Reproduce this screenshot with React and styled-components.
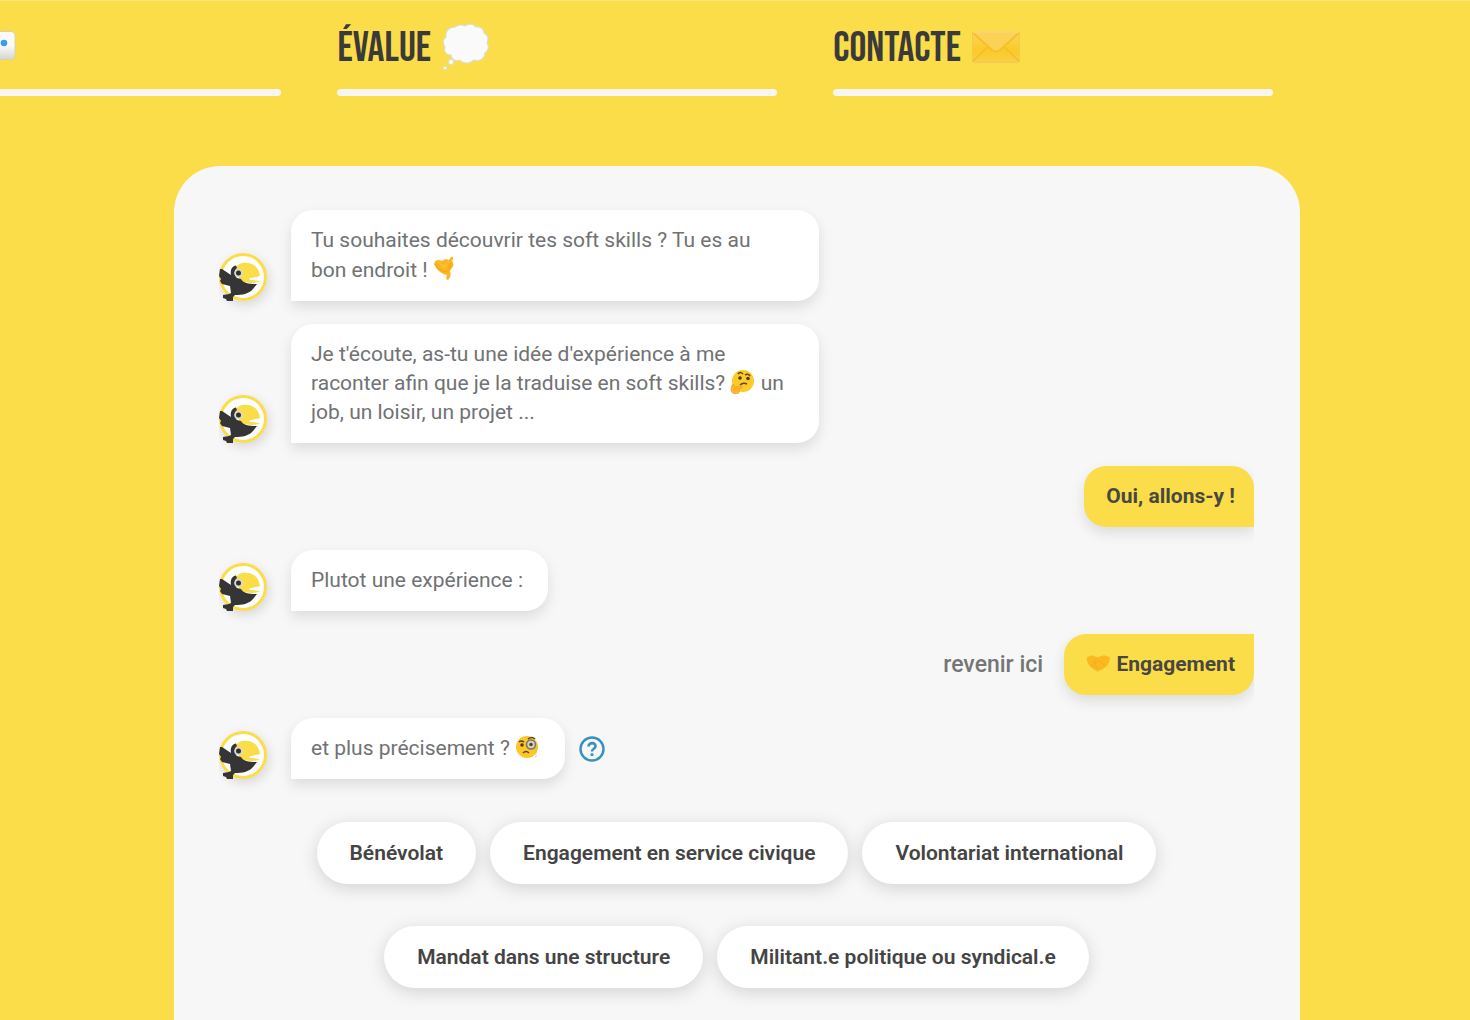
import React from "react";
import styled, { createGlobalStyle } from "styled-components";

const GlobalStyle = createGlobalStyle`
  * { box-sizing: border-box; }
  body {
    margin: 0;
    background: #fbdd49;
    color: #3a3a3a;
    font-family: Roboto, "Liberation Sans", sans-serif;
    overflow: hidden;
  }
  button { font: inherit; color: inherit; border: 0; cursor: pointer; }
`;

const Page = styled.div`
  display: flex;
  flex-direction: column;
  min-height: 100vh;
  border-top: 1px solid #fae57a;
`;

const Steps = styled.nav`
  display: grid;
  grid-template-columns: 281fr 439fr 439fr;
  gap: 56px;
  padding: 16px 197px 0 0;
`;

const StepColumn = styled.div`
  display: flex;
  flex-direction: column;
`;

const Step = styled.a`
  display: flex;
  align-items: center;
  gap: 11px;
  height: 60px;
  color: #3a3a3a;
  text-decoration: none;
`;

const StepBar = styled.div`
  height: 7px;
  margin-top: 12px;
  border-radius: ${(p) => (p.$cut ? "0 4px 4px 0" : "4px")};
  background: #f8f6f0;
`;

const StepTitle = styled.span`
  padding-top: 4px;
  font-family: "Bebas Neue", "Roboto Condensed", "Liberation Sans Narrow", "Liberation Sans", sans-serif;
  font-size: 42px;
  font-weight: 400;
  line-height: 60px;
`;

const CardArea = styled.main`
  display: flex;
  flex: 1;
  padding: 70px 170px 0 174px;
`;

const Card = styled.section`
  flex: 1;
  min-width: 0;
  padding: 44px 46px 40px 45px;
  border-radius: 46px 46px 0 0;
  background: #f7f7f7;
`;

const Chat = styled.div`
  display: flex;
  flex-direction: column;
  gap: 23px;
`;

const Row = styled.div`
  display: flex;
  align-items: ${(p) => (p.$user ? "center" : "flex-end")};
  justify-content: ${(p) => (p.$user ? "flex-end" : "flex-start")};
  gap: ${(p) => (p.$user ? "21px" : "24px")};
`;

const AvatarFrame = styled.div`
  width: 48px;
  height: 48px;
  flex: none;
  border-radius: 50%;
  box-shadow: 2px 4px 12px rgba(0, 0, 0, 0.13);
  clip-path: inset(-20px -20px -20px 0);

  svg { display: block; }
`;

const Bubble = styled.div`
  width: ${(p) => (p.$wide ? "528px" : "auto")};
  padding: 16px 25px 16px 20px;
  border-radius: 22px 22px 22px 0;
  background: #fff;
  box-shadow: 0 6px 14px rgba(0, 0, 0, 0.11);
  color: #707274;
  font-size: 21px;
  font-weight: 400;
  line-height: 29px;
  white-space: nowrap;
`;

const Answer = styled.button`
  padding: 16px 19px 16px 22px;
  border-radius: ${(p) => (p.$last ? "22px 0 22px 22px" : "22px 22px 0 22px")};
  background: #fbdd49;
  box-shadow: 0 6px 14px rgba(0, 0, 0, 0.11);
  clip-path: inset(-20px 0 -24px -20px);
  && {
    color: #484840;
    font-size: 21px;
    font-weight: 700;
    line-height: 29px;
  }
`;

const BackButton = styled.button`
  padding: 0;
  background: none;
  && {
    color: #757575;
    font-size: 23px;
    font-weight: 500;
  }
`;

const HelpGroup = styled.div`
  display: flex;
  align-items: center;
  gap: 14px;
`;

const HelpButton = styled.button`
  display: flex;
  padding: 0;
  background: none;
`;

const Choices = styled.div`
  display: flex;
  flex-wrap: wrap;
  justify-content: center;
  gap: 42px 14px;
  margin-top: 43px;
  padding: 0 80px;
`;

const Choice = styled.button`
  height: 62px;
  padding: 0 33px;
  border-radius: 31px;
  background: #fff;
  box-shadow: 0 4px 18px rgba(0, 0, 0, 0.15);
  white-space: nowrap;
  && {
    font-size: 21px;
    font-weight: 600;
    color: #444;
  }
`;

const InlineIcon = styled.svg`
  vertical-align: -4px;
`;

function Avatar() {
  return (
    <AvatarFrame>
      <svg width="48" height="48" viewBox="0 0 48 48" role="img" aria-label="Corbeau">
        <circle cx="24" cy="24" r="22.5" fill="#fff" stroke="#fbdd49" strokeWidth="3" />
        <path d="M17 14C20 10 24 9 28 10C35 10 40 15 41 23L30 26L41 28C36 31 28 30 21 28Z" fill="#fbdd49" />
        <path d="M30 25.500L41 23.500L41 27.500L31 27Z" fill="#fff" />
        <path d="M1 16L3 16L12 22C11 17 13 13 17 12.500L18 15C15 17 15 22 18 25L22 26C24 30 30 31 38 31L34 36C30 41 23 42 16 42L14 44L14 48L8 48L7 46L4 45L4 42L10 41L12 40L11 33L3 31L1 28L2 26L0 23Z" fill="#353535" />
        <circle cx="19.500" cy="20" r="4.300" fill="#d8d8d5" />
        <circle cx="19.500" cy="20" r="2.500" fill="#2f2f2f" />
      </svg>
    </AvatarFrame>
  );
}

function Dice() {
  return (
    <svg width="16" height="32" viewBox="0 0 16 32" aria-hidden="true">
      <defs>
        <linearGradient id="dice" x2="0" y2="1">
          <stop offset=".5" stopColor="#fafafa" />
          <stop offset="1" stopColor="#d7d5cf" />
        </linearGradient>
      </defs>
      <rect x="-16" y=".5" width="31" height="28" rx="4" fill="url(#dice)" stroke="#d9d2a8" />
      <circle cx="4" cy="12" r="3.3" fill="#3f9af2" />
    </svg>
  );
}

function Thought() {
  return (
    <svg width="48" height="48" viewBox="0 0 48 48" aria-hidden="true">
      <g fill="#fafafa" stroke="#deddc8" strokeWidth="1.2">
        <path d="M13 4C15 2 20 1 23 3C27 0 32 1 34 4C38 3 42 6 42 10C46 12 47 16 45 20C48 24 46 28 43 30C43 35 38 39 32 37C28 41 21 41 18 37C13 39 9 36 9 32C4 32 1 28 3 24C0 20 1 16 4 14C3 8 7 4 13 4Z" />
        <circle cx="9" cy="39" r="2.7" />
        <circle cx="3" cy="45" r="1.7" />
      </g>
    </svg>
  );
}

function Envelope() {
  return (
    <svg width="48" height="32" viewBox="0 0 48 32" aria-hidden="true">
      <defs>
        <linearGradient id="mail" x2="0" y2="1">
          <stop stopColor="#fbd65d" />
          <stop offset=".6" stopColor="#fbca28" />
          <stop offset="1" stopColor="#f8cf49" />
        </linearGradient>
      </defs>
      <rect x=".5" y=".5" width="47" height="31" rx="1" fill="url(#mail)" stroke="#f3c94f" />
      <path d="M1 30L17 15M47 30L31 15" stroke="#f4bb27" strokeWidth="1.5" />
      <path d="M1 2L20 19Q24 22 28 19L47 2" fill="#fbd255" stroke="#f6bf2c" strokeWidth="2" />
      <path d="M1 1H47" stroke="#f9d670" strokeWidth="2" />
    </svg>
  );
}

function HandHeart() {
  return (
    <InlineIcon width="22" height="26" viewBox="0 0 22 26" aria-hidden="true">
      <path d="M1 9C2 5 5 4 9 6C11 4 14 4 16 5L18 2C20 1 21 3 19 6C21 9 21 11 18 14L17 16C18 19 18 22 15 25L13 24L14 20C8 19 3 14 1 9Z" fill="#fbb51e" />
      <path d="M2 9C4 13 8 16 13 17C16 15 18 12 18 8" fill="none" stroke="#f2a51b" />
      <path d="M5 7L12 12L16 6" fill="none" stroke="#fcc02f" strokeWidth="2" />
    </InlineIcon>
  );
}

function Thinking() {
  return (
    <InlineIcon width="25" height="25" viewBox="0 0 25 25" aria-hidden="true">
      <circle cx="13" cy="12" r="11" fill="#fccb27" />
      <path d="M8 5Q10 2 13 5M15 6Q18 4 20 7" fill="none" stroke="#5b4421" strokeWidth="1.5" />
      <circle cx="10" cy="9" r="1.8" fill="#4e3b20" />
      <circle cx="18" cy="9.500" r="1.8" fill="#4e3b20" />
      <path d="M10 16Q13 13 17 15" fill="none" stroke="#65451c" strokeWidth="1.5" />
      <path d="M2 16Q4 14 5 18L12 17Q13 19 9 20Q11 24 6 25Q1 25 1 20Z" fill="#fbb62b" stroke="#ef9c1c" strokeWidth=".7" />
    </InlineIcon>
  );
}

function Monocle() {
  return (
    <InlineIcon width="25" height="25" viewBox="0 0 25 25" aria-hidden="true">
      <circle cx="12" cy="13" r="11" fill="#fcc827" />
      <path d="M4 8Q6 6 9 8M13 5Q17 2 20 5" fill="none" stroke="#5b4421" strokeWidth="1.6" />
      <circle cx="7" cy="11" r="1.8" fill="#4e3b20" />
      <circle cx="16" cy="10.500" r="4.500" fill="#d9d3ae" stroke="#77777a" strokeWidth="1.6" />
      <circle cx="16" cy="10.500" r="1.8" fill="#4e4a40" />
      <path d="M8 19Q11 16 14 19" fill="none" stroke="#65451c" strokeWidth="1.5" />
      <path d="M21 12V24" stroke="#b5b5a8" strokeDasharray="1 1" />
    </InlineIcon>
  );
}

function Handshake() {
  return (
    <InlineIcon width="25" height="22" viewBox="0 0 26 22" aria-hidden="true">
      <path d="M1 4L6 2L12 4L19 2L25 4C25 9 22 13 18 16L12 19L7 16C3 13 0 8 1 4Z" fill="#fcb91f" />
      <path d="M11 5L8 9Q11 11 14 8L20 13M5 11L8 14M8 10L12 16" fill="none" stroke="#f5a91b" />
    </InlineIcon>
  );
}

function HelpIcon() {
  return (
    <svg width="26" height="26" viewBox="0 0 26 26" fill="none" stroke="#3690c4" aria-hidden="true">
      <circle cx="13" cy="13" r="11.500" strokeWidth="2.4" />
      <path d="M9.500 10.500C9.500 6 17 6 16.500 10.500C16.300 13 13 12.500 13 15.500" strokeWidth="2.6" />
      <path d="M13 17.300V20" strokeWidth="2.8" />
    </svg>
  );
}

const choices = [
  "Bénévolat",
  "Engagement en service civique",
  "Volontariat international",
  "Mandat dans une structure",
  "Militant.e politique ou syndical.e",
];

export default function App() {
  return (
    <>
      <GlobalStyle />
      <Page>
        <Steps aria-label="Étapes">
          <StepColumn>
            <Step href="#jeu" aria-label="Jeu"><Dice /></Step>
            <StepBar $cut />
          </StepColumn>
          <StepColumn>
            <Step href="#evalue"><StepTitle>ÉVALUE</StepTitle><Thought /></Step>
            <StepBar />
          </StepColumn>
          <StepColumn>
            <Step href="#contacte"><StepTitle>CONTACTE</StepTitle><Envelope /></Step>
            <StepBar />
          </StepColumn>
        </Steps>
        <CardArea>
          <Card>
            <Chat>
              <Row>
                <Avatar />
                <Bubble $wide>
                  Tu souhaites découvrir tes soft skills ? Tu es au<br />
                  bon endroit ! <HandHeart />
                </Bubble>
              </Row>
              <Row>
                <Avatar />
                <Bubble $wide>
                  Je t'écoute, as-tu une idée d'expérience à me<br />
                  raconter afin que je la traduise en soft skills? <Thinking /> un<br />
                  job, un loisir, un projet ...
                </Bubble>
              </Row>
              <Row $user><Answer>Oui, allons-y !</Answer></Row>
              <Row>
                <Avatar />
                <Bubble>Plutot une expérience :</Bubble>
              </Row>
              <Row $user>
                <BackButton>revenir ici</BackButton>
                <Answer $last><Handshake /> Engagement</Answer>
              </Row>
              <Row>
                <Avatar />
                <HelpGroup>
                  <Bubble>et plus précisement ? <Monocle /></Bubble>
                  <HelpButton aria-label="Aide"><HelpIcon /></HelpButton>
                </HelpGroup>
              </Row>
            </Chat>
            <Choices>
              {choices.map((label) => <Choice key={label}>{label}</Choice>)}
            </Choices>
          </Card>
        </CardArea>
      </Page>
    </>
  );
}
